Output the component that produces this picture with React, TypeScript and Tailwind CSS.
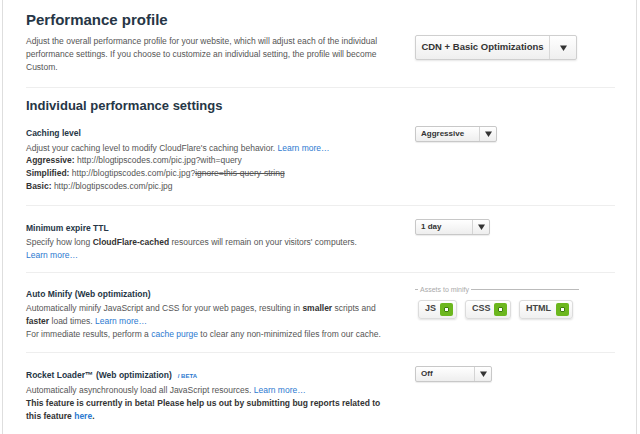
import React from 'react';

const Caret = () => (
  <svg width="7" height="6" viewBox="0 0 7 6" className="fill-[#333]">
    <path d="M0 0.5h7L3.5 6z" />
  </svg>
);

const Select: React.FC<{ label: string; width: string }> = ({ label, width }) => (
  <div
    className={`flex h-[16px] ${width} items-stretch rounded-[2px] border border-[#c8c8c8] bg-gradient-to-b from-white to-[#eeeeee] shadow-[0_1px_1px_rgba(0,0,0,0.08)]`}
  >
    <span className="flex flex-1 items-center pl-[5px] text-[8px] font-bold text-[#333]">{label}</span>
    <span className="flex w-[17px] items-center justify-center border-l border-[#d4d4d4]">
      <Caret />
    </span>
  </div>
);

const Check: React.FC<{ label: string; width: string }> = ({ label, width }) => (
  <div
    className={`flex h-[19px] ${width} items-center justify-between rounded-[3px] border border-[#dcdcdc] bg-gradient-to-b from-white to-[#f0f0f0] pl-[6px] pr-[3px] shadow-[0_1px_2px_rgba(0,0,0,0.12)]`}
  >
    <span className="text-[9px] font-bold text-[#444]">{label}</span>
    <span className="flex h-[13px] w-[13px] items-center justify-center rounded-[2px] bg-[#6cb71e]">
      <span className="h-[5px] w-[5px] rounded-[1px] border border-[#3e7f0b] bg-white" />
    </span>
  </div>
);

const Link: React.FC<{ children: React.ReactNode }> = ({ children }) => (
  <a className="text-[#2b79d0]">{children}</a>
);

export default function App() {
  return (
    <div
      className="h-[434px] w-[640px] overflow-hidden bg-white"
      style={{ fontFamily: '"Liberation Sans", Arial, sans-serif' }}
    >
      <div className="ml-[2px] h-full w-[635px] border-l border-r border-[#dedede] pl-[23px]">
        <div className="w-[589px]">
          {/* Performance profile */}
          <div className="border-b border-[#eeeeee] pb-[13px] pt-[11px]">
            <h1 className="text-[15px] font-bold leading-[18px] text-[#263646]">Performance profile</h1>
            <div className="mt-[6px] flex">
              <div className="w-[389px]">
                <p className="w-[362px] text-[8.5px] leading-[13px] text-[#555]">
                  Adjust the overall performance profile for your website, which will adjust each of the individual
                  performance settings. If you choose to customize an individual setting, the profile will become
                  Custom.
                </p>
              </div>
              <div className="flex h-[25px] w-[162px] items-stretch rounded-[2px] border border-[#cfcfcf] bg-gradient-to-b from-white to-[#efefef] shadow-[0_1px_2px_rgba(0,0,0,0.1)]">
                <span className="flex flex-1 items-center justify-center whitespace-nowrap text-[9.5px] font-bold text-[#333]">
                  CDN + Basic Optimizations
                </span>
                <span className="flex w-[27px] items-center justify-center border-l border-[#d8d8d8]">
                  <Caret />
                </span>
              </div>
            </div>
          </div>

          <h2 className="pt-[10px] text-[13px] font-bold leading-[16px] text-[#263646]">Individual performance settings</h2>

          {/* Caching level */}
          <div className="flex border-b border-[#eeeeee] pb-[12px] pt-[13px]">
            <div className="w-[389px] text-[8.5px] leading-[12.7px] text-[#555]">
              <div className="font-bold text-[#263646]">Caching level</div>
              <div className="mt-[2px]">
                Adjust your caching level to modify CloudFlare's caching behavior. <Link>Learn more…</Link>
              </div>
              <div>
                <b className="text-[#333]">Aggressive:</b> http://blogtipscodes.com/pic.jpg?with=query
              </div>
              <div>
                <b className="text-[#333]">Simplified:</b> http://blogtipscodes.com/pic.jpg?
                <span className="line-through">ignore=this-query-string</span>
              </div>
              <div>
                <b className="text-[#333]">Basic:</b> http://blogtipscodes.com/pic.jpg
              </div>
            </div>
            <div className="-mt-[1px]">
              <Select label="Aggressive" width="w-[82px]" />
            </div>
          </div>

          {/* Minimum expire TTL */}
          <div className="flex border-b border-[#eeeeee] pb-[10px] pt-[12px]">
            <div className="w-[389px] pt-[4px] text-[8.5px] leading-[12.7px] text-[#555]">
              <div className="font-bold text-[#263646]">Minimum expire TTL</div>
              <div className="mt-[2px] w-[362px]">
                Specify how long <b className="text-[#333]">CloudFlare-cached</b> resources will remain on your
                visitors' computers.
              </div>
              <Link>Learn more…</Link>
            </div>
            <div className="pt-[1px]">
              <Select label="1 day" width="w-[75px]" />
            </div>
          </div>

          {/* Auto Minify */}
          <div className="flex border-b border-[#eeeeee] pb-[12px] pt-[11px]">
            <div className="w-[389px] pt-[4px] text-[8.5px] leading-[12.7px] text-[#555]">
              <div className="font-bold text-[#263646]">Auto Minify (Web optimization)</div>
              <div className="mt-[2px] w-[362px]">
                <div>
                  Automatically minify JavaScript and CSS for your web pages, resulting in{' '}
                  <b className="text-[#333]">smaller</b> scripts and <b className="text-[#333]">faster</b> load times.{' '}
                  <Link>Learn more…</Link>
                </div>
                <div>
                  For immediate results, perform a <Link>cache purge</Link> to clear any non-minimized files from our
                  cache.
                </div>
              </div>
            </div>
            <div className="w-[164px] pt-[1px]">
              <div className="flex items-center text-[7px] leading-[9px] text-[#aaa]">
                <span className="mr-[2px] h-px w-[3px] bg-[#bbb]" />
                <span>Assets to minify</span>
                <span className="ml-[2px] h-px flex-1 bg-[#bbb]" />
              </div>
              <div className="ml-[3px] mt-[6px] flex gap-[8px]">
                <Check label="JS" width="w-[39px]" />
                <Check label="CSS" width="w-[46px]" />
                <Check label="HTML" width="w-[54px]" />
              </div>
            </div>
          </div>

          {/* Rocket Loader */}
          <div className="flex pt-[12px]">
            <div className="w-[389px] pt-[4px] text-[8.5px] leading-[12.7px] text-[#555]">
              <div className="font-bold text-[#263646]">
                Rocket Loader™ (Web optimization)
                <span className="ml-[6px] align-middle text-[6px] font-bold leading-none text-[#2b79d0]">/ BETA</span>
              </div>
              <div className="mt-[2px] w-[362px]">
                <div>
                  Automatically asynchronously load all JavaScript resources. <Link>Learn more…</Link>
                </div>
                <div className="font-bold text-[#333]">
                  This feature is currently in beta! Please help us out by submitting bug reports related to this
                  feature <Link>here</Link>.
                </div>
              </div>
            </div>
            <div className="pt-[1px]">
              <Select label="Off" width="w-[77px]" />
            </div>
          </div>
        </div>
      </div>
    </div>
  );
}
